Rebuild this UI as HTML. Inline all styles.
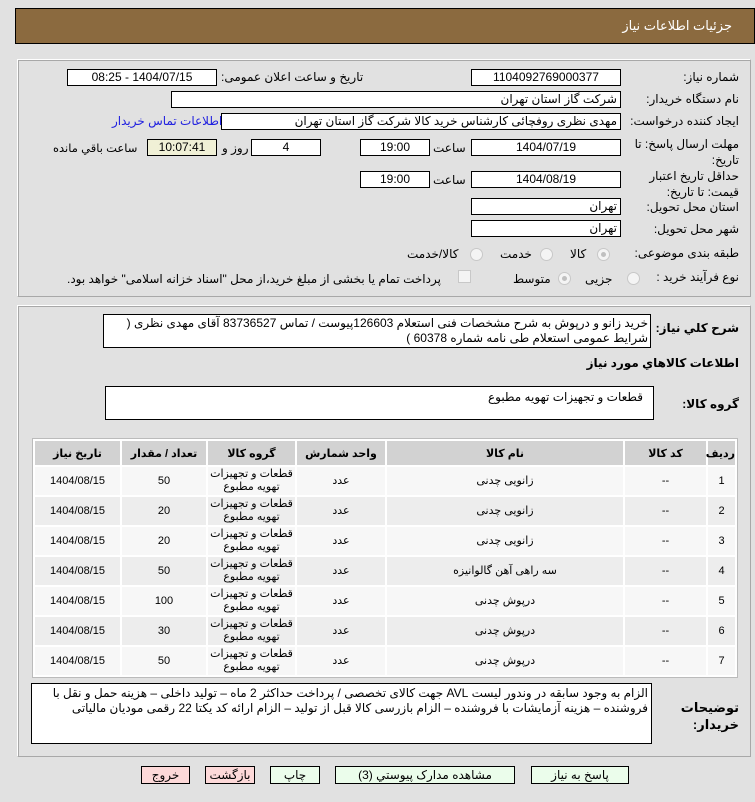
<!DOCTYPE html>
<html lang="fa" dir="rtl">
<head>
<meta charset="utf-8">
<style>
*{box-sizing:border-box;margin:0;padding:0}
body{width:755px;height:802px;background:#e1e1e1;position:relative;overflow:hidden;font-family:"Liberation Sans","DejaVu Sans",sans-serif;font-size:12px;color:#000}
.a{position:absolute}
.box{position:absolute;background:#fff;border:1px solid #000;height:17px;line-height:15px;padding:0 3px;white-space:nowrap;overflow:hidden}
.c{text-align:center}
.lbl{position:absolute;white-space:nowrap;font-size:12px}
.panel{position:absolute;border:1px solid #a8a8a8;border-top-color:#fff;border-left-color:#fff;box-shadow:inset 1px 1px 0 #a8a8a8}
.radio{position:absolute;width:13px;height:13px;border-radius:50%;border:1px solid #c8c8c8;background:#f4f4f4}
.radio.on::after{content:"";position:absolute;left:3px;top:3px;width:5px;height:5px;border-radius:50%;background:#c0c0c0}
table{position:absolute;left:32px;top:438px;width:706px;border-spacing:2px;border:1px solid #bbb;background:#fff;table-layout:fixed}
th{background:#d2d2d2;height:24px;font-size:11px;font-weight:bold;padding:0;white-space:nowrap}
td{height:28px;text-align:center;font-size:11px;line-height:13px;padding:0;white-space:nowrap;overflow:hidden}
tr.o td{background:#f7f7f7}
tr.e td{background:#ededed}
.btn{position:absolute;top:766px;height:18px;border:1px solid #000;background:#ebfdeb;text-align:center;line-height:16px;font-size:12px}
.red{background:#fdd9d9}
</style>
</head>
<body>
<div class="a" style="left:15px;top:8px;width:740px;height:36px;background:#8b6a3f;border:1px solid #000"></div>
<div class="lbl" style="right:23px;top:18px;color:#fff;font-size:13px">جزئیات اطلاعات نیاز</div>

<div class="panel" style="left:17px;top:59px;width:734px;height:238px"></div>

<div class="lbl" style="right:16px;top:70px">شماره نیاز:</div>
<div class="box c" style="left:471px;top:69px;width:150px">1104092769000377</div>
<div class="lbl" style="left:221px;top:70px">تاریخ و ساعت اعلان عمومی:</div>
<div class="box c" style="left:67px;top:69px;width:150px">1404/07/15 - 08:25</div>

<div class="lbl" style="right:16px;top:92px">نام دستگاه خریدار:</div>
<div class="box" style="left:171px;top:91px;width:450px">شرکت گاز استان تهران</div>

<div class="lbl" style="right:16px;top:114px">ایجاد کننده درخواست:</div>
<div class="box" style="left:221px;top:113px;width:400px">مهدی نظری روفچائی کارشناس خرید کالا شرکت گاز استان تهران</div>
<div class="lbl" style="left:112px;top:114px;color:#2020e0">اطلاعات تماس خریدار</div>

<div class="lbl" style="right:16px;top:136px;line-height:16px;text-align:right">مهلت ارسال پاسخ: تا<br>تاریخ:</div>
<div class="box c" style="left:471px;top:139px;width:150px">1404/07/19</div>
<div class="lbl" style="left:433px;top:141px">ساعت</div>
<div class="box c" style="left:360px;top:139px;width:70px">19:00</div>
<div class="box c" style="left:251px;top:139px;width:70px">4</div>
<div class="lbl" style="left:222px;top:141px">روز و</div>
<div class="box c" style="left:147px;top:139px;width:70px;background:#f0f0d6">10:07:41</div>
<div class="lbl" style="left:53px;top:141px;font-size:11.5px">ساعت باقي مانده</div>

<div class="lbl" style="right:16px;top:168px;line-height:16px;text-align:right">حداقل تاریخ اعتبار<br>قیمت: تا تاریخ:</div>
<div class="box c" style="left:471px;top:171px;width:150px">1404/08/19</div>
<div class="lbl" style="left:433px;top:173px">ساعت</div>
<div class="box c" style="left:360px;top:171px;width:70px">19:00</div>

<div class="lbl" style="right:16px;top:200px">استان محل تحویل:</div>
<div class="box" style="left:471px;top:198px;width:150px">تهران</div>
<div class="lbl" style="right:16px;top:222px">شهر محل تحویل:</div>
<div class="box" style="left:471px;top:220px;width:150px">تهران</div>

<div class="lbl" style="right:16px;top:246px">طبقه بندی موضوعی:</div>
<div class="radio on" style="left:597px;top:248px"></div>
<div class="lbl" style="left:570px;top:247px">کالا</div>
<div class="radio" style="left:540px;top:248px"></div>
<div class="lbl" style="left:500px;top:247px">خدمت</div>
<div class="radio" style="left:470px;top:248px"></div>
<div class="lbl" style="left:407px;top:247px">کالا/خدمت</div>

<div class="lbl" style="right:16px;top:270px">نوع فرآیند خرید :</div>
<div class="radio" style="left:627px;top:272px"></div>
<div class="lbl" style="left:585px;top:272px">جزیی</div>
<div class="radio on" style="left:558px;top:272px"></div>
<div class="lbl" style="left:513px;top:272px">متوسط</div>
<div class="a" style="left:458px;top:270px;width:13px;height:13px;border:1px solid #c8c8c8;background:#f4f4f4"></div>
<div class="lbl" style="left:67px;top:272px;font-size:12px">پرداخت تمام یا بخشی از مبلغ خرید،از محل "اسناد خزانه اسلامی" خواهد بود.</div>

<div class="panel" style="left:17px;top:305px;width:734px;height:452px"></div>

<div class="lbl" style="right:16px;top:321px;font-weight:bold;font-size:12px">شرح کلي نیاز:</div>
<div class="box" style="left:103px;top:314px;width:548px;height:34px;white-space:normal;line-height:15px;padding:1px 2px">خرید زانو و درپوش  به شرح مشخصات فنی استعلام 126603پیوست / تماس 83736527 آقای مهدی نظری  ( شرایط عمومی استعلام طی نامه شماره 60378 )</div>
<div class="lbl" style="right:16px;top:356px;font-weight:bold;font-size:12px">اطلاعات کالاهاي مورد نیاز</div>

<div class="lbl" style="right:16px;top:397px;font-weight:bold;font-size:12px">گروه کالا:</div>
<div class="box" style="left:105px;top:386px;width:549px;height:34px;padding:3px 10px">قطعات و تجهیزات تهویه مطبوع</div>

<table>
<colgroup><col style="width:27px"><col style="width:81px"><col style="width:236px"><col style="width:88px"><col style="width:87px"><col style="width:84px"><col></colgroup>
<tr><th>ردیف</th><th>کد کالا</th><th>نام کالا</th><th>واحد شمارش</th><th>گروه کالا</th><th>تعداد / مقدار</th><th>تاریخ نیاز</th></tr>
<tr class="o"><td>1</td><td>--</td><td>زانویی چدنی</td><td>عدد</td><td>قطعات و تجهیزات<br>تهویه مطبوع</td><td>50</td><td>1404/08/15</td></tr>
<tr class="e"><td>2</td><td>--</td><td>زانویی چدنی</td><td>عدد</td><td>قطعات و تجهیزات<br>تهویه مطبوع</td><td>20</td><td>1404/08/15</td></tr>
<tr class="o"><td>3</td><td>--</td><td>زانویی چدنی</td><td>عدد</td><td>قطعات و تجهیزات<br>تهویه مطبوع</td><td>20</td><td>1404/08/15</td></tr>
<tr class="e"><td>4</td><td>--</td><td>سه راهی آهن گالوانیزه</td><td>عدد</td><td>قطعات و تجهیزات<br>تهویه مطبوع</td><td>50</td><td>1404/08/15</td></tr>
<tr class="o"><td>5</td><td>--</td><td>درپوش چدنی</td><td>عدد</td><td>قطعات و تجهیزات<br>تهویه مطبوع</td><td>100</td><td>1404/08/15</td></tr>
<tr class="e"><td>6</td><td>--</td><td>درپوش چدنی</td><td>عدد</td><td>قطعات و تجهیزات<br>تهویه مطبوع</td><td>30</td><td>1404/08/15</td></tr>
<tr class="o"><td>7</td><td>--</td><td>درپوش چدنی</td><td>عدد</td><td>قطعات و تجهیزات<br>تهویه مطبوع</td><td>50</td><td>1404/08/15</td></tr>
</table>

<div class="lbl" style="right:16px;top:699px;font-weight:bold;font-size:13px;line-height:17px;text-align:right">توضیحات<br>خریدار:</div>
<div class="box" style="left:31px;top:683px;width:621px;height:61px;white-space:normal;line-height:15px;padding:2px 3px">الزام به وجود سابقه در وندور لیست AVL جهت کالای تخصصی / پرداخت حداکثر 2 ماه – تولید  داخلی – هزینه حمل و نقل با فروشنده – هزینه آزمایشات با فروشنده – الزام بازرسی کالا قبل از تولید – الزام ارائه  کد یکتا  22 رقمی مودیان مالیاتی</div>

<div class="btn" style="left:531px;width:98px">پاسخ به نیاز</div>
<div class="btn" style="left:335px;width:180px">مشاهده مدارک پیوستي (3)</div>
<div class="btn" style="left:270px;width:50px">چاپ</div>
<div class="btn red" style="left:205px;width:50px">بازگشت</div>
<div class="btn red" style="left:141px;width:49px">خروج</div>
</body>
</html>
